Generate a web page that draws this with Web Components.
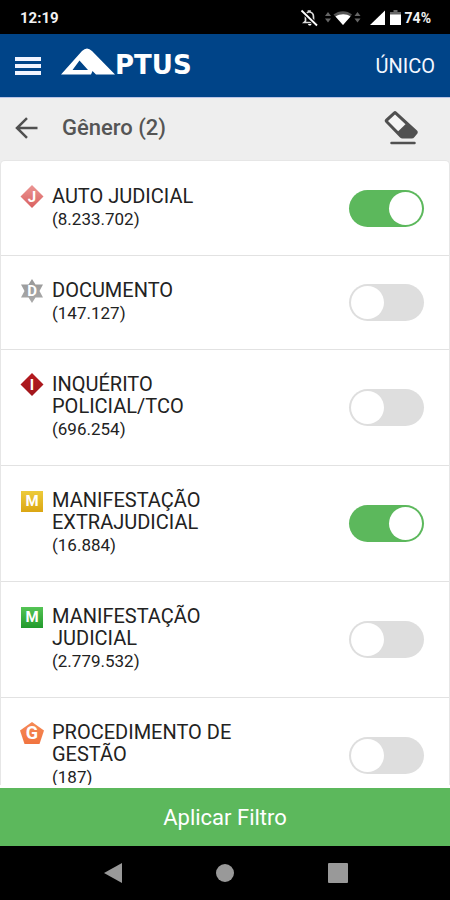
<!DOCTYPE html>
<html lang="pt-BR">
<head>
<meta charset="utf-8">
<meta name="viewport" content="width=device-width, initial-scale=1">
<title>Aptus</title>
<style>
    body {
        margin: 0;
        font-family: Roboto, "Liberation Sans", sans-serif;
        background: #000;
        color: #222;
    }
</style>
</head>
<body>
<aptus-screen>
    <status-bar slot="top" time="12:19" battery="74%"></status-bar>
    <app-header slot="top" unit="ÚNICO"></app-header>
    <filter-heading slot="top">Gênero (2)</filter-heading>

    <filter-row icon="judicial" count="8.233.702" checked>AUTO JUDICIAL</filter-row>
    <filter-row icon="documento" count="147.127">DOCUMENTO</filter-row>
    <filter-row icon="inquerito" count="696.254">INQUÉRITO POLICIAL/TCO</filter-row>
    <filter-row icon="extrajudicial" count="16.884" checked>MANIFESTAÇÃO EXTRAJUDICIAL</filter-row>
    <filter-row icon="manifestacao" count="2.779.532">MANIFESTAÇÃO JUDICIAL</filter-row>
    <filter-row icon="gestao" count="187">PROCEDIMENTO DE GESTÃO</filter-row>

    <apply-button slot="bottom">Aplicar Filtro</apply-button>
    <nav-bar slot="bottom"></nav-bar>
</aptus-screen>

<script>
// Page frame: fixed bars above and below, the list scrolls in between
class AptusScreen extends HTMLElement {
    constructor() {
        super();
        this.attachShadow({ mode: 'open' });
        this.shadowRoot.innerHTML = `
            <style>
                :host { display: flex; flex-direction: column; height: 100vh; background: #eee; }
                .list {
                    flex: 1;
                    min-height: 0;
                    overflow-y: auto;
                    scrollbar-width: none;
                    padding-top: 1px;
                    background: #fff;
                    border: 1px solid #e6e6e6;
                    border-bottom: 0;
                    border-radius: 5px 5px 0 0;
                }
                .foot { border-top: 3px solid #fff; }
            </style>
            <slot name="top"></slot>
            <main class="list"><slot></slot></main>
            <div class="foot"><slot name="bottom"></slot></div>
        `;
    }
}
customElements.define('aptus-screen', AptusScreen);

class StatusBar extends HTMLElement {
    constructor() {
        super();
        this.attachShadow({ mode: 'open' });
    }

    connectedCallback() {
        this.shadowRoot.innerHTML = `
            <style>
                :host {
                    display: flex;
                    align-items: center;
                    justify-content: space-between;
                    height: 34px;
                    padding: 2px 19px 0 20px;
                    box-sizing: border-box;
                    background: #000;
                    color: #f2f2f2;
                    font-size: 15px;
                    font-weight: 700;
                }
                .right { display: flex; align-items: center; gap: 4px; font-size: 14px; }
                svg { display: block; }
            </style>
            <span>${this.getAttribute('time')}</span>
            <span class="right">
                <svg width="86" height="18" viewBox="0 0 86 18" fill="#fff" aria-hidden="true">
                    <path d="M4 13.500 5.500 12V8c0-3 1-4.500 3-5V2h1.500v1c2.500.5 3.500 2.500 3.500 5v4l1.500 1.500z" fill="none" stroke="#ddd" stroke-width="1.700"/>
                    <path d="M8 15h3.500c-.5 2-3 2-3.500 0z"/>
                    <path d="M1.500 1.500 17 16.500" stroke="#000" stroke-width="4"/>
                    <path d="M1.500 1.500 17 16.500" stroke="#fff" stroke-width="1.800"/>
                    <path d="M25 7l3-4 3 4zM25 9.500h6l-3 4z" fill="#666"/>
                    <path d="M33.500 5.500C39 1 47 1 52 5.500L43 16z" fill="#555"/>
                    <path d="M35.500 7.500c4.500-3 11-3 15 0L43 16z"/>
                    <path d="M54.500 7l3-4 3 4zM54.500 9.500h6l-3 4z" fill="#666"/>
                    <path d="M70 16 85 1.500V16z"/>
                </svg>
                <svg width="11" height="18" viewBox="0 0 11 18" aria-hidden="true">
                    <path d="M3.500 1h4v2H11v3H0V3h3.500z" fill="#666"/>
                    <path d="M0 5.500h11V16H0z" fill="#fff"/>
                </svg>
                <span>${this.getAttribute('battery')}</span>
            </span>
        `;
    }
}
customElements.define('status-bar', StatusBar);

class AppHeader extends HTMLElement {
    constructor() {
        super();
        this.attachShadow({ mode: 'open' });
    }

    connectedCallback() {
        this.shadowRoot.innerHTML = `
            <style>
                :host {
                    display: flex;
                    align-items: center;
                    height: 64px;
                    padding: 0 15px;
                    box-sizing: border-box;
                    background: #004488;
                    border-bottom: 1px solid #b9c4e6;
                    color: #f4f7ff;
                }
                button { border: 0; padding: 0; background: none; color: inherit; cursor: pointer; }
                svg { display: block; }
                .logo {
                    display: flex;
                    align-items: flex-end;
                    margin-left: 20px;
                    padding-bottom: 8px;
                    color: #fff;
                    text-decoration: none;
                }
                .word { font: 700 26px/20px "DejaVu Sans", sans-serif; }
                .unit { margin-left: auto; font-size: 20px; }
            </style>
            <button type="button" aria-label="Menu">
                <svg width="26" height="20" viewBox="0 0 26 20" fill="#f1f4ff"><path d="M0 1h26v4H0zM0 8h26v4H0zM0 15h26v4H0z"/></svg>
            </button>
            <a class="logo" href="#" aria-label="Aptus">
                <svg width="54" height="27" viewBox="0 0 54 27" fill="#fff" aria-hidden="true">
                    <path fill-rule="evenodd" d="M0 26.500 21 3Q26 -2 31 3L54 26.500H35L31.500 23 30 26.500zM11.500 22H27L18.500 12.500z"/>
                </svg>
                <span class="word">PTUS</span>
            </a>
            <span class="unit">${this.getAttribute('unit')}</span>
        `;
    }
}
customElements.define('app-header', AppHeader);

class FilterHeading extends HTMLElement {
    constructor() {
        super();
        this.attachShadow({ mode: 'open' });
        this.shadowRoot.innerHTML = `
            <style>
                :host {
                    display: flex;
                    align-items: center;
                    height: 62px;
                    padding: 0 31px 2px 15px;
                    box-sizing: border-box;
                    background: #eee;
                    color: #555;
                }
                button { border: 0; padding: 0; background: none; cursor: pointer; }
                svg { display: block; }
                h1 { margin: 0 auto 0 24px; font-size: 22px; line-height: 28px; font-weight: 500; }
            </style>
            <button type="button" aria-label="Voltar">
                <svg width="23" height="22" viewBox="0 0 23 22" fill="none" stroke="#505050" stroke-width="2.500"><path d="M22.500 11H2.500M12 1.200 2 11l10 9.800"/></svg>
            </button>
            <h1><slot></slot></h1>
            <button type="button" aria-label="Limpar seleção">
                <svg width="35" height="36" viewBox="0 0 35 36">
                    <path d="M1.500 9 9.500 1.700q1.500-1.400 3 0L33 20.500q1.500 1.500 0 3.500L30.500 27q-1 1.500-3 1.500h-9q-1.500 0-2.500-1L1.500 12.500q-1.700-1.700 0-3.500z" fill="#505050"/>
                    <path d="M4 11 11 4.500l10.500 9.700-7.300 7z" fill="#f5f5f5"/>
                    <path d="M7.500 33h23" stroke="#505050" stroke-width="2.500" stroke-linecap="round"/>
                </svg>
            </button>
        `;
    }
}
customElements.define('filter-heading', FilterHeading);

class GenreIcon extends HTMLElement {
    constructor() {
        super();
        this.attachShadow({ mode: 'open' });

        // name: [outline, top colour, bottom colour, letter, letter size]
        this.icons = {
            "judicial": ["M12 0 23.500 11.500 12 23 .5 11.500z", "#eb9694", "#d9605f", "J", 15],
            "documento": ["M12 0l3.500 5.500H23L19.500 12 23 18.500h-7.500L12 24l-3.500-5.500H1L4.500 12 1 5.500h7.500z", "#989898", "#aaaaaa", "D", 15],
            "inquerito": ["M12 0 23.500 11.500 12 23 .5 11.500z", "#b51a20", "#a0161b", "I", 15],
            "extrajudicial": ["M1 2h22v21H1z", "#edcb3a", "#dba613", "M", 15],
            "manifestacao": ["M1 2h22v21H1z", "#55c455", "#219a2c", "M", 15],
            "gestao": ["M12 1 24 9.500 19.500 23h-15L0 9.500z", "#f58a55", "#f17440", "G", 18]
        };
    }

    connectedCallback() {
        const [shape, top, bottom, letter, size] = this.icons[this.getAttribute('name')];
        this.shadowRoot.innerHTML = `
            <style>
                :host { display: block; }
                svg { display: block; }
                text { font-family: Roboto, sans-serif; font-weight: 700; }
            </style>
            <svg width="24" height="24" viewBox="0 0 24 24" aria-hidden="true">
                <defs>
                    <linearGradient id="fill" x2="0" y2="1">
                        <stop stop-color="${top}"/><stop offset="1" stop-color="${bottom}"/>
                    </linearGradient>
                </defs>
                <path d="${shape}" fill="url(#fill)"/>
                <text x="12" y="${12 + Math.round(size * 0.36)}" font-size="${size}" text-anchor="middle" fill="#fff">${letter}</text>
            </svg>
        `;
    }
}
customElements.define('genre-icon', GenreIcon);

class FilterRow extends HTMLElement {
    constructor() {
        super();
        this.attachShadow({ mode: 'open' });
    }

    connectedCallback() {
        this.shadowRoot.innerHTML = `
            <style>
                :host { display: block; border-bottom: 1px solid #e2e2e2; }
                label {
                    display: grid;
                    grid-template-columns: 24px 3fr 2fr;
                    column-gap: 8px;
                    padding: 23px 25px 24px 19px;
                    cursor: pointer;
                }
                .title { display: block; font-size: 20px; line-height: 22px; }
                .count { display: block; font-size: 17px; line-height: 24px; }
                input {
                    appearance: none;
                    place-self: center end;
                    width: 75px;
                    height: 37px;
                    margin: 0;
                    padding: 2px;
                    box-sizing: border-box;
                    display: flex;
                    border-radius: 19px;
                    background: #dedede;
                    cursor: pointer;
                }
                input::before { content: ""; width: 33px; height: 33px; border-radius: 50%; background: #fff; }
                input:checked { background: #5cb85c; justify-content: flex-end; }
            </style>
            <label for="toggle">
                <genre-icon name="${this.getAttribute('icon')}"></genre-icon>
                <span>
                    <span class="title"><slot></slot></span>
                    <span class="count">(${this.getAttribute('count')})</span>
                </span>
                <input id="toggle" type="checkbox" role="switch" ${this.hasAttribute('checked') ? 'checked' : ''}>
            </label>
        `;
    }
}
customElements.define('filter-row', FilterRow);

class ApplyButton extends HTMLElement {
    constructor() {
        super();
        this.attachShadow({ mode: 'open' });
        this.shadowRoot.innerHTML = `
            <style>
                :host { display: block; }
                button {
                    display: block;
                    width: 100%;
                    height: 58px;
                    border: 0;
                    background: #5cb85c;
                    color: #fff;
                    font: inherit;
                    font-size: 22px;
                    cursor: pointer;
                }
            </style>
            <button type="button"><slot></slot></button>
        `;
    }
}
customElements.define('apply-button', ApplyButton);

// Android navigation keys
class NavBar extends HTMLElement {
    constructor() {
        super();
        this.attachShadow({ mode: 'open' });
        this.shadowRoot.innerHTML = `
            <style>
                :host { display: flex; align-items: center; height: 54px; padding: 0 12.5%; background: #000; }
                button { flex: 1; border: 0; padding: 0; background: none; cursor: pointer; }
                svg { display: block; margin: 0 auto; fill: #999; }
            </style>
            <button type="button" aria-label="Voltar"><svg width="20" height="20"><path d="M19 0v20L1 10z"/></svg></button>
            <button type="button" aria-label="Início"><svg width="20" height="20"><circle cx="10" cy="10" r="9"/></svg></button>
            <button type="button" aria-label="Recentes"><svg width="20" height="20"><rect width="20" height="20" rx="1"/></svg></button>
        `;
    }
}
customElements.define('nav-bar', NavBar);
</script>
</body>
</html>
